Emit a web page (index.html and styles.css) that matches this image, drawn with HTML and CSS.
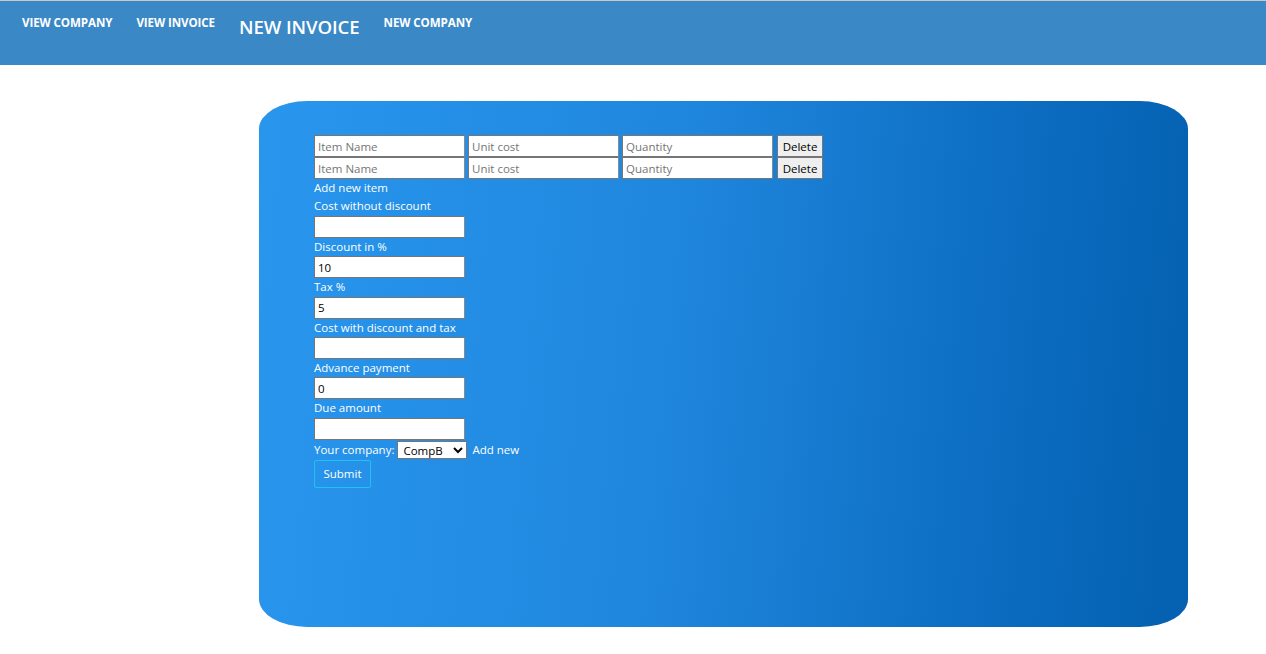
FILE: index.html
```html
<!DOCTYPE html>
<html>
<head>
<meta charset="utf-8">
<title>New Invoice</title>
<link rel="stylesheet" href="styles.css">
</head>
<body>
<header class="topbar">
  <nav class="nav">
    <a class="nav-link" href="#">VIEW COMPANY</a>
    <a class="nav-link" href="#">VIEW INVOICE</a>
    <a class="nav-link nav-active" href="#">NEW INVOICE</a>
    <a class="nav-link" href="#">NEW COMPANY</a>
  </nav>
</header>
<main class="card">
  <form class="form">
    <div class="item-row">
      <input class="field" type="text" placeholder="Item Name"><input class="field" type="text" placeholder="Unit cost"><input class="field" type="text" placeholder="Quantity"><button type="button" class="del-btn">Delete</button>
    </div>
    <div class="item-row">
      <input class="field" type="text" placeholder="Item Name"><input class="field" type="text" placeholder="Unit cost"><input class="field" type="text" placeholder="Quantity"><button type="button" class="del-btn">Delete</button>
    </div>
    <div class="line">Add new item</div>
    <div class="line">Cost without discount</div>
    <input class="field" type="text">
    <div class="line">Discount in %</div>
    <input class="field" type="text" value="10">
    <div class="line">Tax %</div>
    <input class="field" type="text" value="5">
    <div class="line">Cost with discount and tax</div>
    <input class="field" type="text">
    <div class="line">Advance payment</div>
    <input class="field" type="text" value="0">
    <div class="line">Due amount</div>
    <input class="field" type="text">
    <div class="company-row">
      <span>Your company:</span>
      <select class="company-select"><option>CompB</option><option>CompA</option></select>
      <span>Add new</span>
    </div>
    <button type="submit" class="submit-btn">Submit</button>
  </form>
</main>
</body>
</html>
```
FILE: styles.css
```css
* { box-sizing: border-box; }
html, body { margin: 0; padding: 0; background: #ffffff; }
body {
  font-family: "Open Sans", "Noto Sans", "Liberation Sans", sans-serif;
  font-size: 11.5px;
  color: #ffffff;
}
.topbar {
  height: 65px;
  background: #3a89c6;
  border-top: 1px solid #c9c9c9;
}
.nav {
  display: flex;
  align-items: flex-start;
  padding: 14px 0 0 10px;
}
.nav-link {
  color: #ffffff;
  text-decoration: none;
  font-weight: 700;
  font-size: 11.6px;
  line-height: 16px;
  padding: 0 12px;
  letter-spacing: -0.1px;
}
.nav-active {
  font-size: 18.6px;
  font-weight: 600;
  line-height: 24px;
  padding-top: 0;
}
.card {
  margin: 36px 78px 0 259px;
  height: 526px;
  border-radius: 48px / 28px;
  background: linear-gradient(95deg, #2996ee 0%, #1f86dd 45%, #0b6cc0 80%, #0460b0 100%);
  padding: 34px 55px;
}
.form { display: flex; flex-direction: column; align-items: flex-start; }
.item-row { display: flex; gap: 3px; height: 22px; }
.item-row .del-btn { margin-left: 1px; }
.field {
  display: block;
  width: 151px;
  height: 22px;
  border: 1px solid #767676;
  border-right-color: #8a8a8a;
  background: #fff;
  padding: 1px 3px;
  font-family: inherit;
  font-size: 11.5px;
  color: #000;
  outline: none;
}
.field::placeholder { color: #757575; }
.del-btn {
  height: 22px;
  width: 46px;
  padding: 0;
  border: 1px solid #767676;
  background: #efefef;
  font-family: inherit;
  font-size: 11.5px;
  color: #000;
}
.line { line-height: 18.4px; height: 18.4px; }
.company-row {
  display: flex;
  align-items: center;
  gap: 3px;
  height: 20px;
  margin-top: 0;
}
.company-select {
  width: 70px;
  height: 18px;
  font-family: inherit;
  font-size: 11.5px;
  border: 1px solid #767676;
  background: #fff;
  color: #000;
  padding: 0 0 0 1px;
  margin-right: 2px;
}
.submit-btn {
  margin-top: 0;
  width: 57px;
  height: 28px;
  border: 1px solid #1ec4ef;
  border-radius: 2px;
  background: transparent;
  color: #fff;
  font-family: inherit;
  font-size: 11.5px;
}
```
